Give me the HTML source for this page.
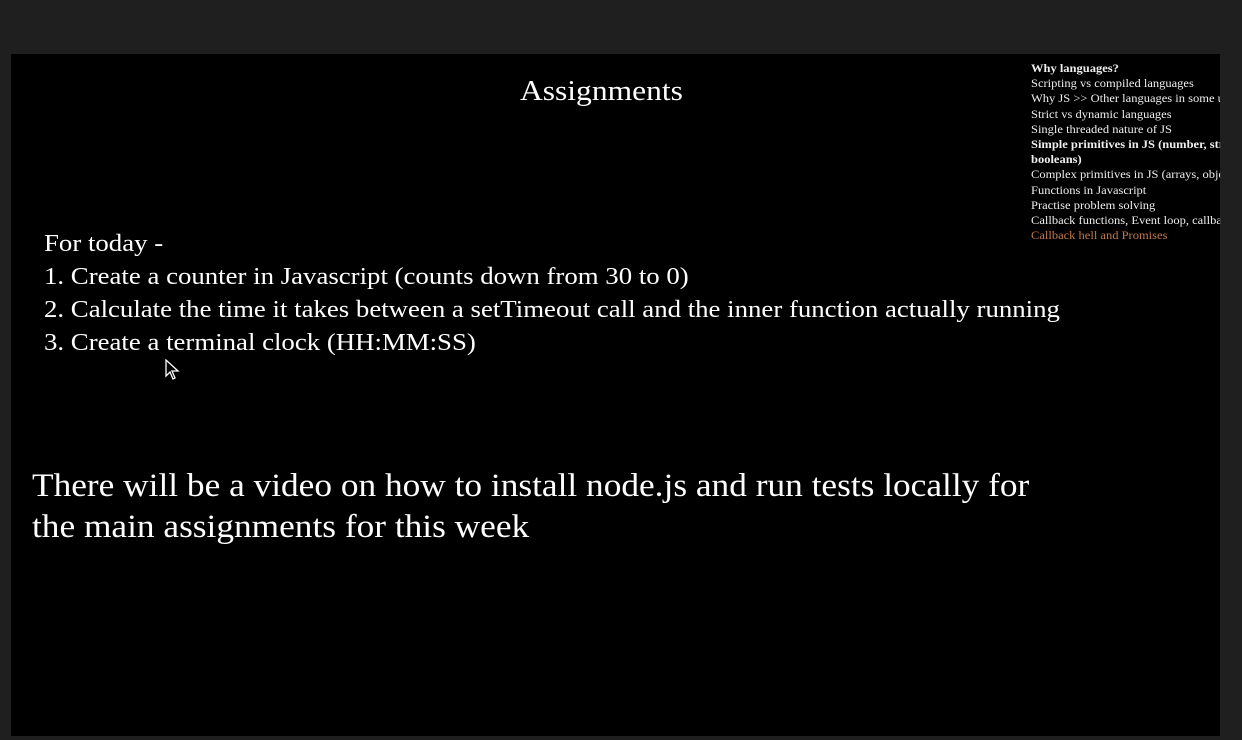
<!DOCTYPE html>
<html><head><style>
body{margin:0;width:1242px;height:740px;background:#1f1f1f;position:relative;overflow:hidden;font-family:"Liberation Serif",serif;color:#fff}
.slide{position:absolute;left:11px;top:54px;width:1209px;height:682px;background:#000}
.t{position:absolute;white-space:nowrap;transform-origin:0 0}
.side{position:absolute;left:1031px;top:62px;font-size:11.5px;line-height:15.2px;color:#eee;width:174px;overflow:hidden;transform:scaleX(1.087);transform-origin:0 0}
.side div{white-space:nowrap}
</style></head><body>
<div class="slide"></div>
<div class="t" style="left:520px;top:75px;font-size:29px;transform:scaleX(1.087)">Assignments</div>
<div class="t" style="left:44px;top:228px;font-size:24px;line-height:33px;transform:scaleX(1.117)">For today -<br>1. Create a counter in Javascript (counts down from 30 to 0)<br>2. Calculate the time it takes between a setTimeout call and the inner function actually running<br>3. Create a terminal clock (HH:MM:SS)</div>
<div class="t" style="left:32px;top:466px;font-size:33px;line-height:41px;transform:scaleX(1.07)">There will be a video on how to install node.js and run tests locally for<br>the main assignments for this week</div>
<svg style="position:absolute;left:165px;top:359px" width="16" height="22" viewBox="0 0 16 22"><path d="M1 1 L1 17 L5 13 L8 20 L10 19 L7 12 L13 12 Z" fill="#000" stroke="#fff" stroke-width="1.3"/></svg>
<div class="side">
<div><b>Why languages?</b></div>
<div>Scripting vs compiled languages</div>
<div>Why JS &gt;&gt; Other languages in some use cases</div>
<div>Strict vs dynamic languages</div>
<div>Single threaded nature of JS</div>
<div><b>Simple primitives in JS (number, strings,</b></div>
<div><b>booleans)</b></div>
<div>Complex primitives in JS (arrays, objects)</div>
<div>Functions in Javascript</div>
<div>Practise problem solving</div>
<div>Callback functions, Event loop, callback hell</div>
<div style="color:#c0784a">Callback hell and Promises</div>
</div>
</body></html>
